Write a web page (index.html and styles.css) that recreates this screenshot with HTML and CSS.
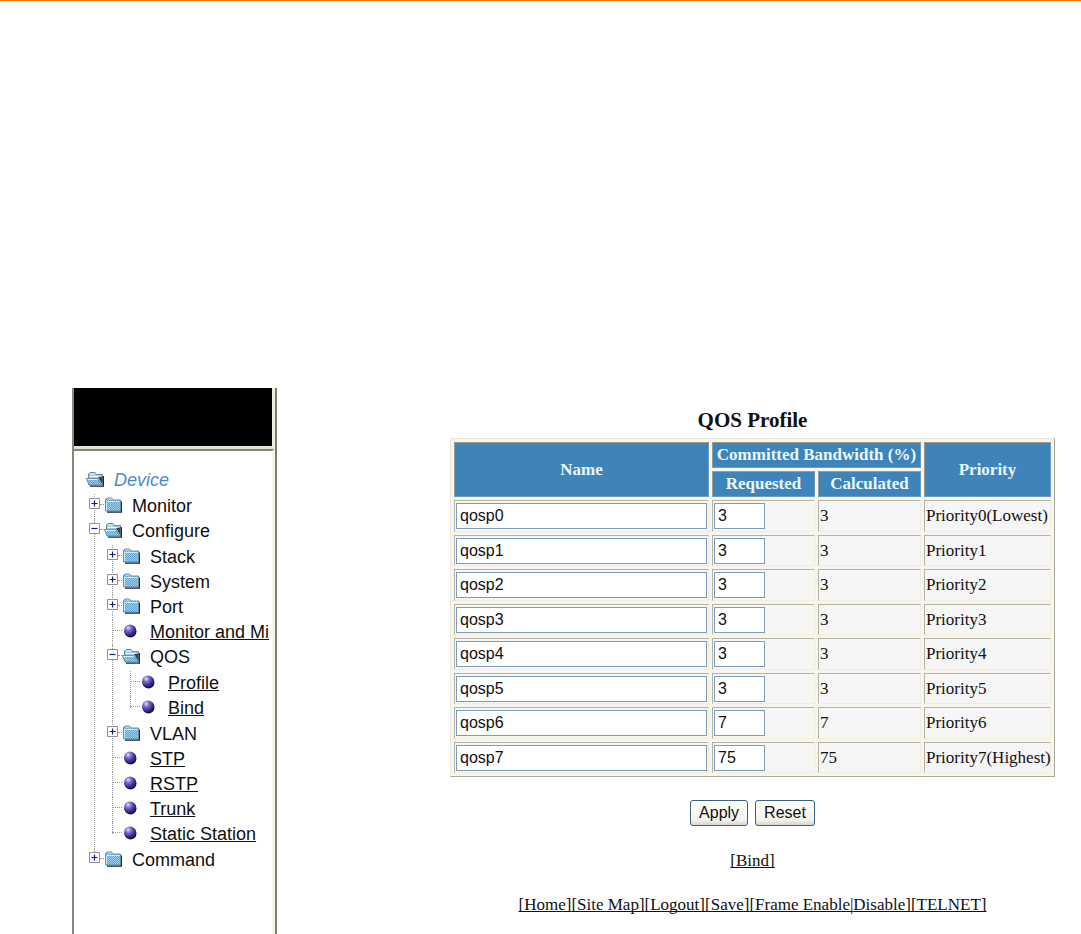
FILE: index.html
```html
<!DOCTYPE html>
<html lang="en">
	<head>
		<title>QOS Profile</title>
		<meta charset="UTF-8" />
		<link rel="stylesheet" href="styles.css">
	</head>
	<body>
		<svg class="symbols" aria-hidden="true">
			<defs>
				<pattern id="dither" width="2" height="2" patternUnits="userSpaceOnUse">
					<rect width="2" height="2" fill="#9cd0f0" />
					<rect width="1" height="1" fill="#5ca4d4" />
					<rect x="1" y="1" width="1" height="1" fill="#5ca4d4" />
				</pattern>
				<radialGradient id="ball" cx="35%" cy="28%" r="75%">
					<stop offset="0" stop-color="#dce8ff" />
					<stop offset="0.3" stop-color="#7c78cc" />
					<stop offset="0.7" stop-color="#40309c" />
					<stop offset="1" stop-color="#1c1458" />
				</radialGradient>
			</defs>
			<symbol id="folder" viewBox="0 0 18 16">
				<path d="M3 15H17.5V4.5" fill="none" stroke="#202830" stroke-width="1.4" />
				<path d="M1.5 14V2.5L3 1H7.5L9 3H16.5V14Z" fill="url(#dither)" stroke="#6890a4" />
				<path d="M2.5 13V4.5H15.5" fill="none" stroke="#c8e8f8" />
				<path d="M3.5 2H7.5" stroke="#b8e4f8" />
			</symbol>
			<symbol id="folder-open" viewBox="0 0 18 16">
				<path d="M4 15H17.5V5" fill="none" stroke="#202830" stroke-width="1.4" />
				<path d="M2.5 13V3L4 1.5H9L10.5 3.5H16.5V14H3.5Z" fill="#a8ccdc" stroke="#6c8894" />
				<path d="M4 3H9M4 5.5H15" stroke="#f0f8fc" />
				<path d="M12 6L16.5 13.5V5.5Z" fill="#284860" />
				<path d="M0.5 7.5H11.5L15.5 14H3Z" fill="url(#dither)" stroke="#6890a4" />
				<path d="M1.5 8.5H11.5" stroke="#d8f0fc" />
			</symbol>
			<symbol id="bullet" viewBox="0 0 18 16">
				<circle cx="8.5" cy="8.5" r="6" fill="#181820" />
				<circle cx="8" cy="7.5" r="6" fill="url(#ball)" />
			</symbol>
			<symbol id="plus" viewBox="0 0 11 11">
				<path d="M0.5 0.5H10.5V10.5H0.5Z" fill="#fff" stroke="#909090" />
				<path d="M2.5 5.5H8.5M5.5 2.5V8.5" stroke="#18187c" stroke-width="1.2" />
			</symbol>
			<symbol id="minus" viewBox="0 0 11 11">
				<path d="M0.5 0.5H10.5V10.5H0.5Z" fill="#fff" stroke="#909090" />
				<path d="M2.5 5.5H8.5" stroke="#18187c" stroke-width="1.2" />
			</symbol>
		</svg>

		<header class="page-top"></header>

		<div class="frames">
			<aside class="sidebar">
				<div class="banner"></div>
				<nav class="tree" aria-label="Device">
					<div class="row device"><svg class="icon"><use href="#folder-open" /></svg><em>Device</em></div>
					<ul>
						<li><div class="row"><button class="toggle" aria-label="Expand Monitor"><svg><use href="#plus" /></svg></button><svg class="icon"><use href="#folder" /></svg>Monitor</div></li>
						<li>
							<div class="row"><button class="toggle" aria-label="Collapse Configure"><svg><use href="#minus" /></svg></button><svg class="icon"><use href="#folder-open" /></svg>Configure</div>
							<ul>
								<li><div class="row"><button class="toggle" aria-label="Expand Stack"><svg><use href="#plus" /></svg></button><svg class="icon"><use href="#folder" /></svg>Stack</div></li>
								<li><div class="row"><button class="toggle" aria-label="Expand System"><svg><use href="#plus" /></svg></button><svg class="icon"><use href="#folder" /></svg>System</div></li>
								<li><div class="row"><button class="toggle" aria-label="Expand Port"><svg><use href="#plus" /></svg></button><svg class="icon"><use href="#folder" /></svg>Port</div></li>
								<li><div class="row leaf"><svg class="icon"><use href="#bullet" /></svg><a href="#mirroring">Monitor and Mi</a></div></li>
								<li>
									<div class="row"><button class="toggle" aria-label="Collapse QOS"><svg><use href="#minus" /></svg></button><svg class="icon"><use href="#folder-open" /></svg>QOS</div>
									<ul>
										<li><div class="row leaf"><svg class="icon"><use href="#bullet" /></svg><a href="#profile">Profile</a></div></li>
										<li><div class="row leaf"><svg class="icon"><use href="#bullet" /></svg><a href="#bind">Bind</a></div></li>
									</ul>
								</li>
								<li><div class="row"><button class="toggle" aria-label="Expand VLAN"><svg><use href="#plus" /></svg></button><svg class="icon"><use href="#folder" /></svg>VLAN</div></li>
								<li><div class="row leaf"><svg class="icon"><use href="#bullet" /></svg><a href="#stp">STP</a></div></li>
								<li><div class="row leaf"><svg class="icon"><use href="#bullet" /></svg><a href="#rstp">RSTP</a></div></li>
								<li><div class="row leaf"><svg class="icon"><use href="#bullet" /></svg><a href="#trunk">Trunk</a></div></li>
								<li><div class="row leaf"><svg class="icon"><use href="#bullet" /></svg><a href="#static">Static Station</a></div></li>
							</ul>
						</li>
						<li><div class="row"><button class="toggle" aria-label="Expand Command"><svg><use href="#plus" /></svg></button><svg class="icon"><use href="#folder" /></svg>Command</div></li>
					</ul>
				</nav>
			</aside>

			<main class="content">
				<h1>QOS Profile</h1>
				<form action="#profile">
					<table class="profiles">
						<colgroup>
							<col />
							<col class="bandwidth" />
							<col class="bandwidth" />
							<col class="priority" />
						</colgroup>
						<thead>
							<tr>
								<th rowspan="2">Name</th>
								<th colspan="2">Committed Bandwidth (%)</th>
								<th rowspan="2">Priority</th>
							</tr>
							<tr>
								<th>Requested</th>
								<th>Calculated</th>
							</tr>
						</thead>
						<tbody>
							<tr>
								<td><input type="text" class="name" aria-label="Name 0" value="qosp0" /></td>
								<td><input type="text" class="percent" aria-label="Requested 0" value="3" /></td>
								<td>3</td>
								<td>Priority0(Lowest)</td>
							</tr>
							<tr>
								<td><input type="text" class="name" aria-label="Name 1" value="qosp1" /></td>
								<td><input type="text" class="percent" aria-label="Requested 1" value="3" /></td>
								<td>3</td>
								<td>Priority1</td>
							</tr>
							<tr>
								<td><input type="text" class="name" aria-label="Name 2" value="qosp2" /></td>
								<td><input type="text" class="percent" aria-label="Requested 2" value="3" /></td>
								<td>3</td>
								<td>Priority2</td>
							</tr>
							<tr>
								<td><input type="text" class="name" aria-label="Name 3" value="qosp3" /></td>
								<td><input type="text" class="percent" aria-label="Requested 3" value="3" /></td>
								<td>3</td>
								<td>Priority3</td>
							</tr>
							<tr>
								<td><input type="text" class="name" aria-label="Name 4" value="qosp4" /></td>
								<td><input type="text" class="percent" aria-label="Requested 4" value="3" /></td>
								<td>3</td>
								<td>Priority4</td>
							</tr>
							<tr>
								<td><input type="text" class="name" aria-label="Name 5" value="qosp5" /></td>
								<td><input type="text" class="percent" aria-label="Requested 5" value="3" /></td>
								<td>3</td>
								<td>Priority5</td>
							</tr>
							<tr>
								<td><input type="text" class="name" aria-label="Name 6" value="qosp6" /></td>
								<td><input type="text" class="percent" aria-label="Requested 6" value="7" /></td>
								<td>7</td>
								<td>Priority6</td>
							</tr>
							<tr>
								<td><input type="text" class="name" aria-label="Name 7" value="qosp7" /></td>
								<td><input type="text" class="percent" aria-label="Requested 7" value="75" /></td>
								<td>75</td>
								<td>Priority7(Highest)</td>
							</tr>
						</tbody>
					</table>
					<div class="buttons">
						<button type="submit">Apply</button>
						<button type="reset">Reset</button>
					</div>
				</form>
				<p class="links"><a href="#bind">[Bind]</a></p>
				<p class="links"><a href="#home">[Home]</a><a href="#sitemap">[Site Map]</a><a href="#logout">[Logout]</a><a href="#save">[Save]</a><a href="#enable">[Frame Enable|</a><a href="#disable">Disable]</a><a href="#telnet">[TELNET]</a></p>
			</main>
		</div>
	</body>
</html>
```
FILE: styles.css
```css
* {
	box-sizing: border-box;
}

body {
	margin: 0;
	min-height: 100vh;
	display: flex;
	flex-direction: column;
	background: #fff;
	color: #111;
	font: 17px "Liberation Serif", "Times New Roman", serif;
}

a {
	color: inherit;
	text-decoration-skip-ink: none;
}

.symbols {
	position: absolute;
	width: 0;
	height: 0;
}

.page-top {
	border-top: 1px solid #e87800;
	padding-bottom: 387px;
}

.frames {
	flex: 1;
	display: flex;
}

/* navigation frame */

.sidebar {
	flex: none;
	display: flex;
	flex-direction: column;
	width: 205px;
	margin-left: 72px;
	border-left: 2px solid #85887a;
	border-right: 2px solid #7c7e6c;
	font: 18px "Liberation Sans", Arial, sans-serif;
}

.banner {
	height: 61px;
	background: #000;
	border-right: 3px solid #f0ece0;
	border-bottom: 3px solid #e4e0d4;
}

.tree {
	flex: 1;
	padding: 17px 0 0 12px;
	border-top: 2px solid #85877a;
	border-right: 3px solid #f6f2e8;
}

.tree ul {
	list-style: none;
	margin: 1px 0;
	padding: 0;
}

.tree > ul {
	margin-left: 3px;
}

.tree li {
	position: relative;
}

.tree li ul {
	margin-left: 18px;
}

.tree li::before {
	content: "";
	position: absolute;
	left: 5px;
	top: 0;
	bottom: 0;
	border-left: 1px dotted #999;
}

.tree li:last-child::before {
	bottom: auto;
	height: 12px;
}

.row {
	display: flex;
	height: 25px;
	line-height: 25px;
	white-space: nowrap;
}

.row::before {
	content: "";
	order: -1;
	width: 4px;
	margin-top: 10px;
	border-top: 1px dotted #999;
}

.row.leaf::before {
	width: 10px;
	margin-left: 5px;
}

.row.device::before {
	display: none;
}

.device {
	color: #4a8cc8;
}

.toggle {
	order: -2;
	position: relative;
	width: 11px;
	height: 11px;
	margin-top: 4px;
	padding: 0;
	border: 0;
	background: none;
}

.toggle svg {
	display: block;
	width: 11px;
	height: 11px;
}

.icon {
	width: 18px;
	height: 16px;
	margin: 3px 10px 0 0;
}

/* profile page */

.content {
	flex: 1;
	margin: 20px 26px 0 173px;
	text-align: center;
}

h1 {
	margin: 0 0 5px;
	font-size: 21px;
	line-height: 25px;
}

.profiles {
	width: 100%;
	table-layout: fixed;
	border: 1px solid;
	border-color: #ece8dc #a8a898 #a8a898 #ece8dc;
	border-spacing: 3px;
	background: #f8f5ee;
}

.bandwidth {
	width: 103px;
}

.priority {
	width: 127px;
}

.profiles th {
	height: 26px;
	padding: 0;
	background: #3f83bb;
	border: 1px solid;
	border-color: #9c9c8c #6c9cc0 #6c9cc0 #9c9c8c;
	color: #e8f8ff;
	line-height: 24px;
	white-space: nowrap;
}

.profiles td {
	height: 32px;
	padding: 0 1px;
	background: #f6f6f6;
	border: 1px solid;
	border-color: #b4b4a4 #f4ecdc #f4ecdc #b4b4a4;
	text-align: left;
	white-space: nowrap;
}

.profiles tr:nth-child(even) td {
	height: 31px;
}

.profiles input {
	display: block;
	height: 26px;
	padding: 0 3px;
	border: 1px solid #7f9db9;
	background: #fff;
	color: #111;
	font: 16px "Liberation Sans", Arial, sans-serif;
}

.name {
	width: 100%;
}

.percent {
	width: 51px;
}

.buttons {
	display: flex;
	justify-content: center;
	gap: 7px;
	margin: 23px 0;
}

.buttons button {
	height: 26px;
	padding: 0 8px;
	border: 1px solid #3c6080;
	border-radius: 3px;
	background: linear-gradient(#fff, #f4f2ec 80%, #d8d4c8);
	color: #111;
	font: 16px "Liberation Sans", Arial, sans-serif;
}

.links {
	margin: 0 0 20px;
	line-height: 24px;
}
```
